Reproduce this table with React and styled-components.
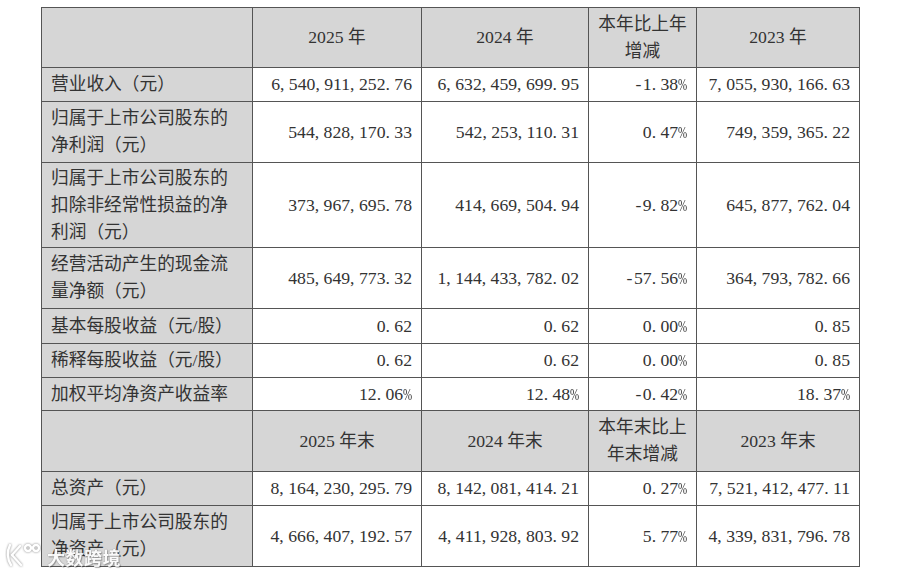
import React from "react";
import styled, { createGlobalStyle } from "styled-components";

const GlobalStyle = createGlobalStyle`
  html, body {
    margin: 0;
    padding: 0;
    background: #ffffff;
  }
  body {
    font-family: "Liberation Serif", "Noto Sans CJK SC", serif;
    color: #333333;
  }
`;

const columns = [211, 169, 167, 108, 163];

const rows = [
  { head: true, h: 60, cells: ["", ["2025 年"], ["2024 年"], ["本年比上年", "增减"], ["2023 年"]] },
  { h: 34, label: ["营业收入（元）"], cells: ["6,540,911,252.76", "6,632,459,699.95", "-1.38%", "7,055,930,166.63"] },
  { h: 61, label: ["归属于上市公司股东的", "净利润（元）"], cells: ["544,828,170.33", "542,253,110.31", "0.47%", "749,359,365.22"] },
  { h: 85, label: ["归属于上市公司股东的", "扣除非经常性损益的净", "利润（元）"], cells: ["373,967,695.78", "414,669,504.94", "-9.82%", "645,877,762.04"] },
  { h: 61, label: ["经营活动产生的现金流", "量净额（元）"], cells: ["485,649,773.32", "1,144,433,782.02", "-57.56%", "364,793,782.66"] },
  { h: 35, label: ["基本每股收益（元/股）"], cells: ["0.62", "0.62", "0.00%", "0.85"] },
  { h: 34, label: ["稀释每股收益（元/股）"], cells: ["0.62", "0.62", "0.00%", "0.85"] },
  { h: 33, label: ["加权平均净资产收益率"], cells: ["12.06%", "12.48%", "-0.42%", "18.37%"] },
  { head: true, h: 61, cells: ["", ["2025 年末"], ["2024 年末"], ["本年末比上", "年末增减"], ["2023 年末"]] },
  { h: 34, label: ["总资产（元）"], cells: ["8,164,230,295.79", "8,142,081,414.21", "0.27%", "7,521,412,477.11"] },
  { h: 61, label: ["归属于上市公司股东的", "净资产（元）"], cells: ["4,666,407,192.57", "4,411,928,803.92", "5.77%", "4,339,831,796.78"] },
];

// half-width punctuation like the Song typeface in the original report
const Half = styled.span`
  display: inline-block;
  width: 0.5em;
  text-align: ${({ align }) => align || "left"};
  overflow: visible;
  white-space: nowrap;
`;

const Pct = styled.span`
  display: inline-block;
  width: 0.5em;
  transform: scaleX(0.62);
  transform-origin: left center;
`;

const Num = ({ value }) => (
  <>
    {value.split("").map((ch, i) => {
      if (ch === "," || ch === ".") return <Half key={i}>{ch}</Half>;
      if (ch === "-") return <Half key={i} align="center">{ch}</Half>;
      if (ch === "%") return <Pct key={i}>{ch}</Pct>;
      return ch;
    })}
  </>
);

const Page = styled.div`
  position: relative;
  width: 900px;
  height: 573px;
  padding: 7px 0 0 41px;
  box-sizing: border-box;
  overflow: hidden;
`;

const Table = styled.table`
  border-collapse: collapse;
  table-layout: fixed;
  width: 819px;
  font-size: 17.7px;
  line-height: 27px;
`;

const Row = styled.tr`
  height: ${({ h }) => h}px;
`;

const Cell = styled.td`
  border: 1px solid #555555;
  padding: 0 9px;
  vertical-align: middle;
  white-space: nowrap;
  background: ${({ gray }) => (gray ? "#d6d6d6" : "#ffffff")};
  text-align: ${({ align }) => align};
  color: #333333;
`;

const Line = styled.div``;

const Watermark = styled.div`
  position: absolute;
  left: 5px;
  bottom: 5px;
  display: flex;
  align-items: flex-end;
  gap: 4px;
  opacity: 0.9;
  pointer-events: none;
`;

const MarkText = styled.span`
  font-family: "Noto Sans CJK SC", sans-serif;
  font-size: 18px;
  font-weight: 700;
  line-height: 22px;
  color: #ffffff;
  letter-spacing: 0.5px;
  text-shadow: 0 0 1px #8a8a8a, 0 0 1px #8a8a8a, 1px 1px 1px rgba(0, 0, 0, 0.35);
`;

const Logo = () => (
  <svg width="38" height="26" viewBox="0 0 38 26">
    <g fill="none" stroke="#ffffff" strokeWidth="2.4" strokeLinecap="round" strokeLinejoin="round" style={{ filter: "drop-shadow(0 0 0.8px #777)" }}>
      <path d="M5 3 C2 9 2 17 6 23" />
      <path d="M7 13 L15 4" />
      <path d="M7 13 L16 23" />
      <circle cx="23" cy="6" r="3" />
      <circle cx="31" cy="6" r="3" />
    </g>
  </svg>
);

const App = () => (
  <>
    <GlobalStyle />
    <Page>
      <Table>
        <colgroup>
          {columns.map((w, i) => (
            <col key={i} style={{ width: w }} />
          ))}
        </colgroup>
        <tbody>
          {rows.map((row, r) =>
            row.head ? (
              <Row key={r} h={row.h}>
                {row.cells.map((c, i) => (
                  <Cell key={i} gray align="center">
                    {c && c.map((l, j) => <Line key={j}>{l}</Line>)}
                  </Cell>
                ))}
              </Row>
            ) : (
              <Row key={r} h={row.h}>
                <Cell gray align="left">
                  {row.label.map((l, j) => (
                    <Line key={j}>{l}</Line>
                  ))}
                </Cell>
                {row.cells.map((c, i) => (
                  <Cell key={i} align="right">
                    <Num value={c} />
                  </Cell>
                ))}
              </Row>
            )
          )}
        </tbody>
      </Table>
      <Watermark>
        <Logo />
        <MarkText>大数跨境</MarkText>
      </Watermark>
    </Page>
  </>
);

export default App;
